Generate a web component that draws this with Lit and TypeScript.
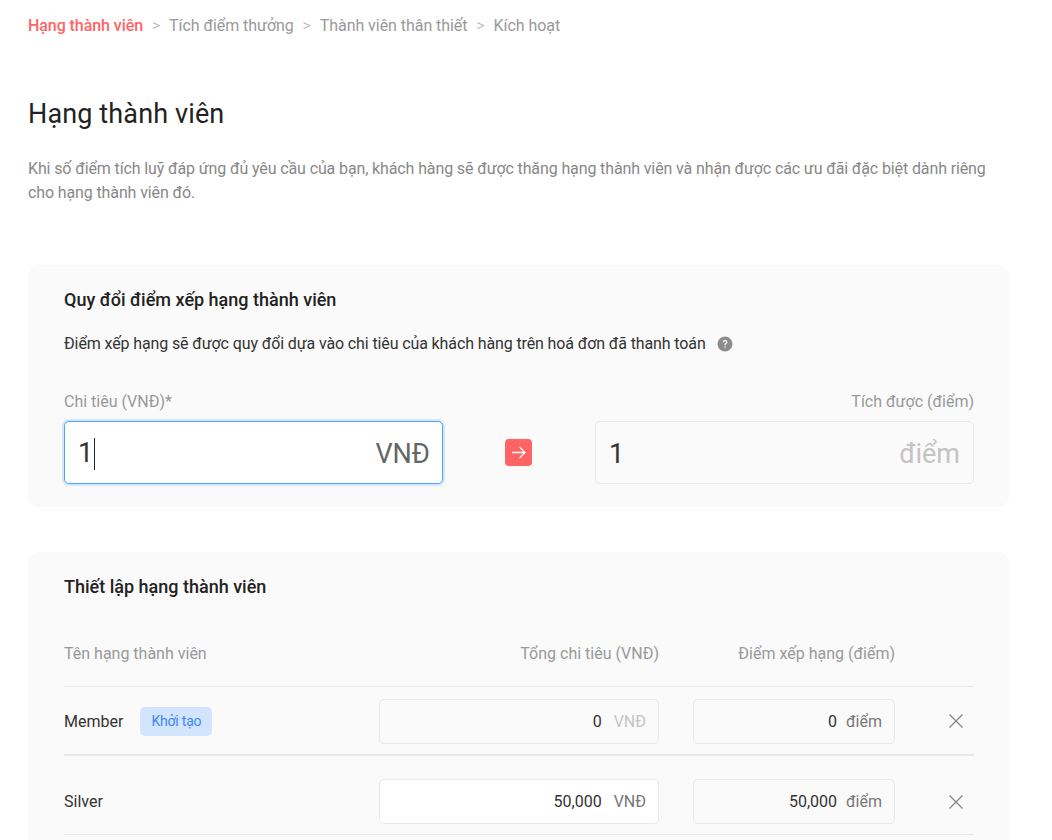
import { LitElement, html, css, TemplateResult } from 'lit';
import { customElement } from 'lit/decorators.js';

interface Tier {
  name: string;
  tag?: string;
  spend: string;
  points: string;
  locked: boolean;
}

const tiers: Tier[] = [
  { name: 'Member', tag: 'Khởi tạo', spend: '0', points: '0', locked: true },
  { name: 'Silver', spend: '50,000', points: '50,000', locked: false },
];

const crumbs = ['Hạng thành viên', 'Tích điểm thưởng', 'Thành viên thân thiết', 'Kích hoạt'];

@customElement('app-root')
export class AppRoot extends LitElement {
  static styles = css`
    :host {
      display: block;
      height: 840px;
      overflow: hidden;
      background: #fff;
      font-family: Roboto, 'Noto Sans', sans-serif;
      font-size: 16px;
      color: #333;
    }

    .page {
      padding: 16px 43px 0 28px;
    }

    .crumbs {
      display: flex;
      align-items: center;
      height: 20px;
      color: #999;
      line-height: 20px;
      letter-spacing: -0.05px;
    }

    .crumb-active {
      color: #ff6464;
      font-weight: 500;
      letter-spacing: -0.07px;
    }

    .crumb-sep {
      width: 26px;
      text-align: center;
      font-weight: 300;
      color: #aaa;
    }

    h1 {
      margin: 60px 0 0;
      font-size: 27px;
      line-height: 36px;
      font-weight: 400;
      letter-spacing: 0.13px;
      color: #222;
    }

    .intro {
      margin: 25px 0 0;
      color: #888;
      line-height: 24px;
      letter-spacing: -0.12px;
    }

    .card {
      background: #fafafa;
      border-radius: 10px;
      padding: 24px 35px 23px 36px;
    }

    .convert {
      margin-top: 60px;
    }

    .tiers {
      margin-top: 45px;
      padding-bottom: 40px;
    }

    h2 {
      margin: 0;
      font-size: 18px;
      line-height: 22px;
      font-weight: 500;
      color: #222;
    }

    .note {
      display: flex;
      align-items: center;
      gap: 11px;
      margin-top: 22px;
      line-height: 22px;
      letter-spacing: -0.118px;
      color: #333;
    }

    .help {
      display: block;
      width: 16px;
      height: 16px;
    }

    .convert-row {
      display: grid;
      grid-template-columns: 379px 1fr 379px;
      margin-top: 35px;
    }

    .label {
      height: 24px;
      margin-bottom: 7px;
      line-height: 24px;
      color: #999;
    }

    .label-end {
      text-align: right;
    }

    .big-input {
      display: flex;
      align-items: center;
      justify-content: space-between;
      box-sizing: border-box;
      height: 63px;
      padding: 2px 13px 0;
      border: 1px solid #e8e8e8;
      border-radius: 5px;
      font-size: 27px;
    }

    .big-focus {
      background: #fff;
      border-color: #4da3ff;
      box-shadow: 0 0 0 2px #d3e8ff;
    }

    .caret {
      display: inline-block;
      width: 1px;
      height: 32px;
      margin-left: 1px;
      background: #222;
      vertical-align: middle;
    }

    .unit-strong {
      margin-right: -1px;
      color: #666;
    }

    .unit-soft {
      color: #c4c4c4;
    }

    .arrow-cell {
      display: flex;
      align-items: center;
      justify-content: center;
      padding: 31px 2px 0 0;
    }

    .arrow {
      display: block;
      width: 27px;
      height: 27px;
    }

    .tier-grid {
      display: grid;
      grid-template-columns: 315px 280px 34px 202px 1fr;
      align-items: center;
    }

    .tier-head {
      height: 65px;
      margin-top: 23px;
      color: #999;
      border-bottom: 1px solid #e8e8e8;
    }

    .head-end {
      text-align: right;
    }

    .tier-row {
      height: 66px;
      padding-top: 1px;
      border-bottom: 2px solid #e8e8e8;
    }

    .tier-row + .tier-row {
      height: 65px;
      padding-top: 13px;
      border-bottom-width: 1px;
    }

    .tier-name {
      display: flex;
      align-items: center;
      gap: 17px;
    }

    .tag {
      width: 72px;
      height: 29px;
      line-height: 29px;
      text-align: center;
      border-radius: 5px;
      background: #d3e4ff;
      color: #3d85ff;
      font-size: 14px;
      letter-spacing: -0.2px;
    }

    .field {
      display: flex;
      align-items: center;
      justify-content: flex-end;
      gap: 12px;
      box-sizing: border-box;
      height: 45px;
      padding: 0 12px;
      border: 1px solid #e8e8e8;
      border-radius: 5px;
    }

    .field-open {
      background: #fff;
    }

    .field-unit {
      color: #777;
    }

    .field-unit.muted {
      color: #c4c4c4;
    }

    .field-gap {
      gap: 9px;
    }

    .remove {
      display: block;
      width: 14px;
      height: 14px;
      justify-self: end;
      margin-right: 11px;
    }
  `;

  private renderTier(t: Tier): TemplateResult {
    return html`
      <div class="tier-grid tier-row">
        <div class="tier-name">
          <span>${t.name}</span>
          ${t.tag ? html`<span class="tag">${t.tag}</span>` : ''}
        </div>
        <div class="field ${t.locked ? '' : 'field-open'}">
          <span>${t.spend}</span>
          <span class="field-unit ${t.locked ? 'muted' : ''}">VNĐ</span>
        </div>
        <div></div>
        <div class="field field-gap">
          <span>${t.points}</span>
          <span class="field-unit">điểm</span>
        </div>
        <svg class="remove" viewBox="0 0 14 14" fill="none" stroke="#888" stroke-width="1.3">
          <path d="M.5 .5l13 13M13.5 .5l-13 13"></path>
        </svg>
      </div>
    `;
  }

  render(): TemplateResult {
    return html`
      <div class="page">
        <nav class="crumbs">
          ${crumbs.map(
            (c, i) => html`
              ${i > 0 ? html`<span class="crumb-sep">&gt;</span>` : ''}
              <span class=${i === 0 ? 'crumb-active' : ''}>${c}</span>
            `,
          )}
        </nav>

        <h1>Hạng thành viên</h1>
        <p class="intro">
          Khi số điểm tích luỹ đáp ứng đủ yêu cầu của bạn, khách hàng sẽ được thăng hạng thành viên
          và nhận được các ưu đãi đặc biệt dành riêng cho hạng thành viên đó.
        </p>

        <section class="card convert">
          <h2>Quy đổi điểm xếp hạng thành viên</h2>
          <div class="note">
            <span>Điểm xếp hạng sẽ được quy đổi dựa vào chi tiêu của khách hàng trên hoá đơn đã thanh toán</span>
            <svg class="help" viewBox="0 0 16 16">
              <circle cx="8" cy="8" r="7.5" fill="#8c8c8c"></circle>
              <path
                d="M6.2 6.3c0-1 .8-1.6 1.8-1.6s1.8.6 1.8 1.5c0 1.3-1.8 1.3-1.8 2.7"
                fill="none"
                stroke="#fff"
                stroke-width="1.2"
              ></path>
              <circle cx="8" cy="11" r=".8" fill="#fff"></circle>
            </svg>
          </div>

          <div class="convert-row">
            <div>
              <div class="label">Chi tiêu (VNĐ)*</div>
              <div class="big-input big-focus">
                <span>1<span class="caret"></span></span>
                <span class="unit-strong">VNĐ</span>
              </div>
            </div>
            <div class="arrow-cell">
              <svg class="arrow" viewBox="0 0 27 27">
                <rect width="27" height="27" rx="4" fill="#ff6464"></rect>
                <path
                  d="M7 13.5h13M14.5 8l5.5 5.5-5.5 5.5"
                  fill="none"
                  stroke="#fff"
                  stroke-width="1.3"
                ></path>
              </svg>
            </div>
            <div>
              <div class="label label-end">Tích được (điểm)</div>
              <div class="big-input">
                <span>1</span>
                <span class="unit-soft">điểm</span>
              </div>
            </div>
          </div>
        </section>

        <section class="card tiers">
          <h2>Thiết lập hạng thành viên</h2>
          <div class="tier-grid tier-head">
            <div>Tên hạng thành viên</div>
            <div class="head-end">Tổng chi tiêu (VNĐ)</div>
            <div></div>
            <div class="head-end">Điểm xếp hạng (điểm)</div>
            <div></div>
          </div>
          ${tiers.map((t) => this.renderTier(t))}
        </section>
      </div>
    `;
  }
}
